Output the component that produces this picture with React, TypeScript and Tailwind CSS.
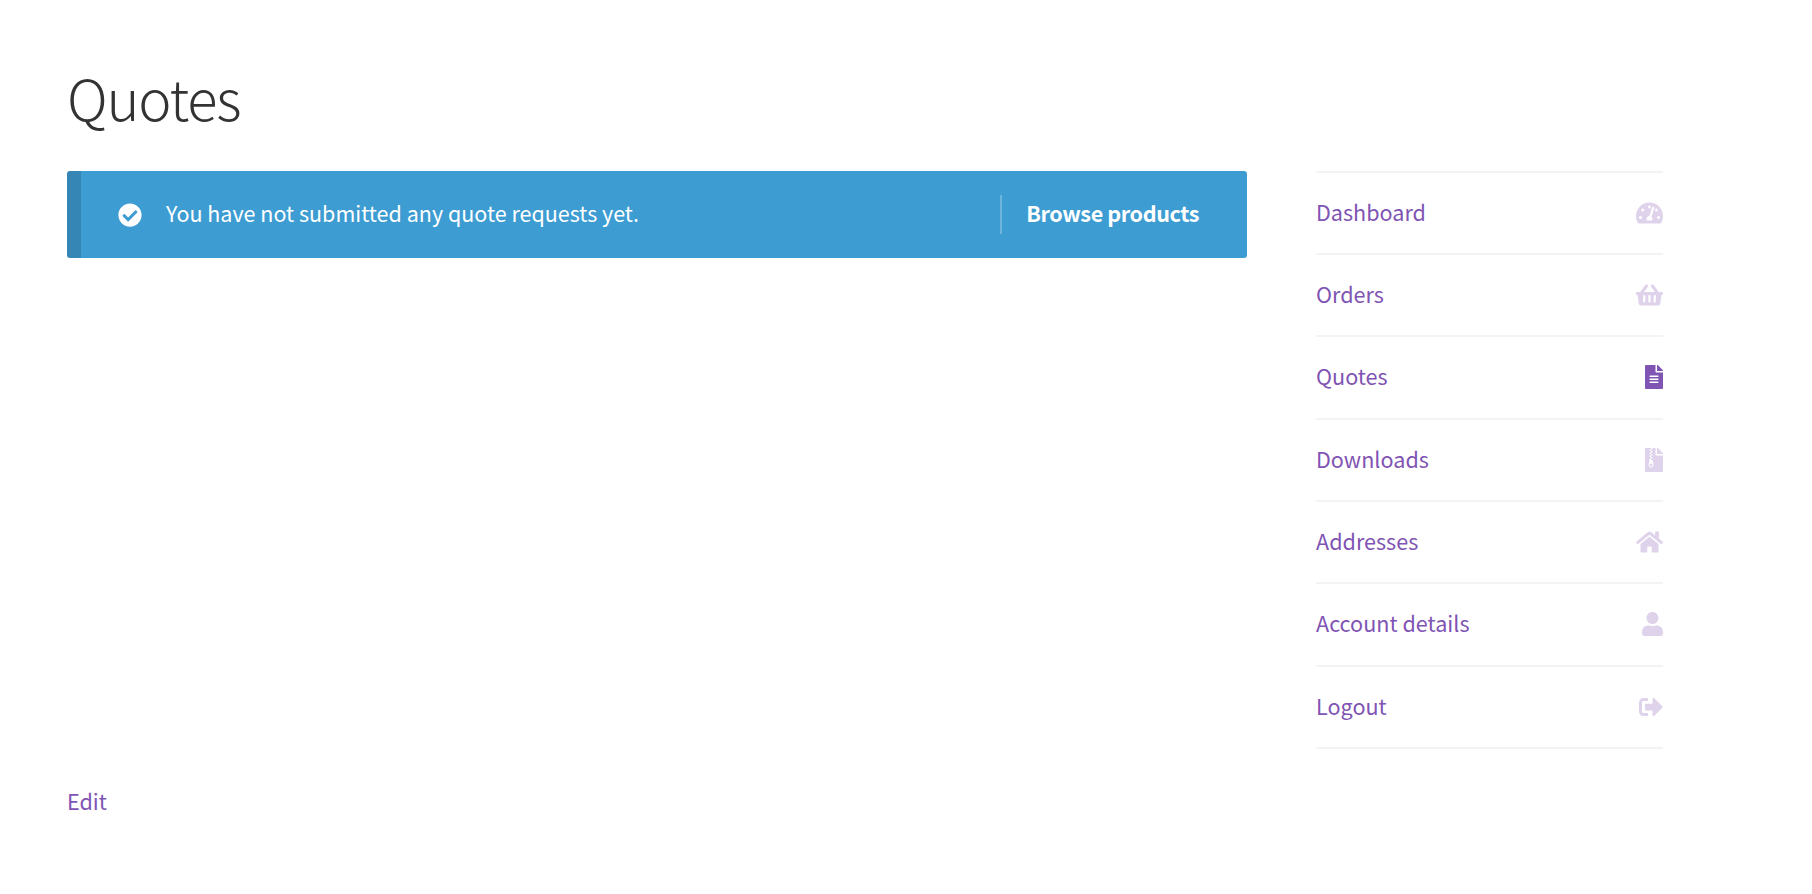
import type { IconType } from "react-icons";
import {
  FaCheckCircle,
  FaFileAlt,
  FaFileArchive,
  FaHome,
  FaShoppingBasket,
  FaSignOutAlt,
  FaTachometerAlt,
  FaUser,
} from "react-icons/fa";

type Item = { label: string; icon: IconType; height: string; width: string; active?: boolean };

const items: Item[] = [
  { label: "Dashboard", icon: FaTachometerAlt, height: "h-[82px]", width: "w-[27px]" },
  { label: "Orders", icon: FaShoppingBasket, height: "h-[82px]", width: "w-[27px]" },
  { label: "Quotes", icon: FaFileAlt, height: "h-[83px] pb-px", width: "w-[18px]", active: true },
  { label: "Downloads", icon: FaFileArchive, height: "h-[82px]", width: "w-[18px]" },
  { label: "Addresses", icon: FaHome, height: "h-[82px]", width: "w-[27px]" },
  { label: "Account details", icon: FaUser, height: "h-[83px] pb-px", width: "w-[21px]" },
  { label: "Logout", icon: FaSignOutAlt, height: "h-[82px]", width: "w-6" },
];

function Notice() {
  return (
    <div className="flex h-[87px] w-[1180px] items-center rounded-[3px] border-l-[14px] border-[#3585b5] bg-[#3d9cd2] pr-12 pl-[37px] text-white">
      <FaCheckCircle className="mt-px h-6 w-6" />
      <span className="-mt-[4px] ml-6 text-[21.5px]">You have not submitted any quote requests yet.</span>
      <a href="#" className="ml-auto flex h-[39px] items-center border-l-2 border-white/25 pl-6 font-bold tracking-[-0.4px]">
        <span className="-mt-[4px]">Browse products</span>
      </a>
    </div>
  );
}

function AccountNav() {
  return (
    <nav className="w-[347px]">
      <ul className="border-t-2 border-[#f3f3f3]">
        {items.map(({ label, icon: Icon, height, width, active }) => (
          <li key={label} className={`${height} border-b-2 border-[#f3f3f3]`}>
            <a href="#" className="flex h-full items-center justify-between text-[#7f54b3]">
              <span className="-mt-[3px]">{label}</span>
              <Icon className={`${width} h-6 ${active ? "" : "opacity-25"}`} />
            </a>
          </li>
        ))}
      </ul>
    </nav>
  );
}

export default function App() {
  return (
    <main className="min-h-[894px] bg-white pt-[57px] pl-[67px] font-['Noto_Sans_CJK_SC',sans-serif] text-[21.6px] leading-[39px]">
      <h1 className="h-[114px] text-[56px] leading-[80px] font-light tracking-[-1.2px] text-[#333333]">Quotes</h1>
      <div className="flex h-[578px] items-start gap-[69px]">
        <Notice />
        <AccountNav />
      </div>
      <a href="#" className="mt-8 block w-fit text-[#7f54b3]">
        Edit
      </a>
    </main>
  );
}
